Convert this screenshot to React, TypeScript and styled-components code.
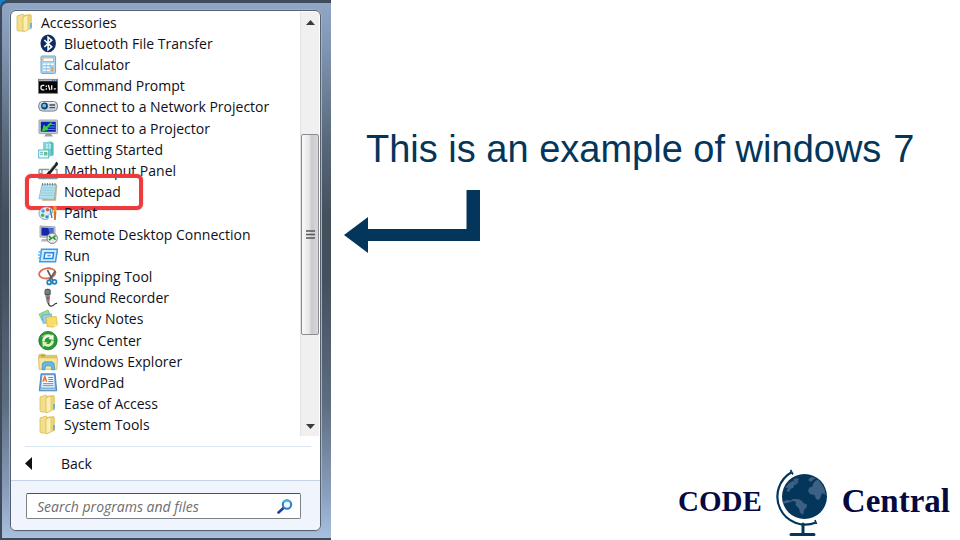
import React from 'react';
import styled, { createGlobalStyle } from 'styled-components';

const GlobalStyle = createGlobalStyle`
  *, *::before, *::after { box-sizing: border-box; }
  body {
    margin: 0;
    background: #fff;
    color: #101018;
    font-family: 'Open Sans', 'Noto Sans', sans-serif;
    font-size: 14px;
  }
  button, input { font: inherit; color: inherit; }
`;

const Page = styled.div`
  display: flex;
  min-height: 100vh;
`;

const Backdrop = styled.aside`
  display: flex;
  flex: 0 0 331px;
  background: #0b84d8;
`;

const MenuFrame = styled.nav`
  display: flex;
  flex: 1;
  padding: 7px 10px 7px 8px;
  border: solid #3f4a5a;
  border-width: 3px 0 2px 2px;
  border-top-left-radius: 8px;
  background: linear-gradient(#8fa6c5 0%, #8197b4 8%, #5a6a7c 25%, #434f5b 40%, #44505d 52%, #5d6d80 75%, #8ba0be 92%, #a8c0df 100%);
`;

const MenuPanel = styled.div`
  display: flex;
  flex: 1;
  flex-direction: column;
  border: 1px solid #56616f;
  border-radius: 6px;
  background: #fff;
  overflow: hidden;
  box-shadow: 0 0 0 1px #a3b1c4;
`;

const Programs = styled.div`
  display: flex;
  flex: 1;
  padding: 1px 1px 0 0;
`;

const ProgramList = styled.ul`
  display: grid;
  flex: 1;
  grid-auto-rows: 1fr;
  margin: 0;
  padding: 0 0 0 4px;
  list-style: none;
`;

const ProgramItem = styled.li<{ $nested?: boolean }>`
  position: relative;
  display: flex;
  padding-left: ${(p) => (p.$nested ? 23 : 0)}px;
`;

const ProgramButton = styled.button`
  display: flex;
  flex: 1;
  align-items: center;
  gap: 6px;
  padding: 0;
  border: 0;
  background: none;
  line-height: 20px;
  white-space: nowrap;
`;

const IconSvg = styled.svg`
  flex: none;
  width: 20px;
  height: 20px;
`;

const Highlight = styled.span`
  position: absolute;
  top: -8px;
  left: 10px;
  width: 118px;
  height: 36px;
  border: 4px solid #ec3a3d;
  border-radius: 6px;
  pointer-events: none;
  box-shadow: 0 0 1px #b33;
`;

const Scrollbar = styled.div`
  display: flex;
  flex: 0 0 19px;
  flex-direction: column;
  border-left: 1px solid #e2e2e2;
  background: #f0f0f0;
`;

const ScrollArrow = styled.button`
  display: flex;
  flex: 0 0 20px;
  align-items: center;
  justify-content: center;
  padding: 0;
  border: 0;
  background: none;
`;

const Track = styled.div`
  display: grid;
  flex: 1;
  grid-template-rows: 102fr 201fr 81fr;
`;

const Thumb = styled.div`
  display: flex;
  grid-row: 2;
  align-items: center;
  justify-content: center;
  border: 1px solid #8c8c90;
  border-radius: 2px;
  background: linear-gradient(90deg, #fafafa, #e6e6e8 45%, #c9c9ce 60%, #d9d9dd);
`;

const BackSection = styled.div`
  display: flex;
  flex: 0 0 34px;
  margin: 10px 9px 0 14px;
  border-top: 1px solid #d9e7f5;
`;

const BackButton = styled.button`
  display: flex;
  flex: 1;
  align-items: center;
  gap: 29px;
  padding: 0;
  border: 0;
  background: none;
`;

const SearchArea = styled.form`
  display: flex;
  padding: 12px 19px 11px 15px;
  border-top: 1px solid #c3d4ea;
  background: #f0f4fd;
`;

const SearchBox = styled.label`
  display: flex;
  flex: 1;
  align-items: center;
  height: 26px;
  padding: 0 7px 0 10px;
  border: 1px solid #7d8288;
  border-top-color: #4c4f54;
  border-radius: 2px;
  background: #fff;
`;

const SearchInput = styled.input.attrs({ type: 'text' })`
  flex: 1;
  min-width: 0;
  padding: 0;
  border: 0;
  outline: 0;
  background: none;
  font-style: italic;
  &::placeholder { color: #6d6d6d; opacity: 1; }
`;

const Content = styled.main`
  display: flex;
  flex: 1;
  flex-direction: column;
  align-items: flex-start;
  padding: 127px 10px 2px 13px;
`;

const Heading = styled.h1`
  display: flex;
  gap: 12px;
  margin: 0 0 19px 22px;
  color: #04365c;
  font: 400 38px/44px 'Liberation Sans', Arial, sans-serif;
  white-space: nowrap;
`;

const Brand = styled.footer`
  display: flex;
  align-items: center;
  align-self: flex-end;
  gap: 12px;
  margin-top: auto;
  color: #05093f;
  font-family: 'Liberation Serif', serif;
  font-weight: 700;
`;

const BrandWord = styled.span<{ $size: number }>`
  font-size: ${(p) => p.$size}px;
  line-height: 60px;
  padding-bottom: 6px;
`;

const Folder = () => (
  <>
    <path d="M2 3l6-2 1 1v16l-6 0-1-1z" fill="#f3df8a" stroke="#d3b74f" strokeWidth=".7" />
    <path d="M9 2l7-1v14l-7 4z" fill="#e4c65c" />
    <path d="M8 4l4-2 1 1v14l-5 2z" fill="#fbf0b4" stroke="#cdae45" strokeWidth=".6" />
    <path d="M13 3l4-1v14l-4 1z" fill="#e9d27a" />
    <path d="M15 10h2v4l-2 2z" fill="#67b4e4" />
  </>
);

const icons: Record<string, React.ReactNode> = {
  folder: <Folder />,
  bluetooth: (
    <>
      <ellipse cx="10.2" cy="9.4" rx="7.7" ry="8.9" fill="#0d2d60" />
      <path d="M6.3 6l7.4 6.8-3.6 3V3.2l3.6 3L6.3 13" fill="none" stroke="#fff" strokeWidth="1.6" />
    </>
  ),
  calculator: (
    <>
      <rect x="3" y="1" width="14.6" height="17.4" rx="1" fill="#acd7f2" stroke="#6ba7cf" />
      <rect x="5" y="3" width="10.6" height="3.6" fill="#fff" stroke="#efa64f" strokeWidth=".9" />
      <path d="M5.3 9.5h2.5m1.2 0h2.5m1.3 0h2.5M5.3 12.5h2.5m1.2 0h2.5M5.3 15.5h2.5m1.2 0h2.5" stroke="#fff" strokeWidth="2" />
      <path d="M5.3 10.8h10M5.3 13.8h6M5.3 16.8h6" stroke="#5f9fca" strokeWidth=".6" />
      <path d="M12.8 12h2.6v4.5h-2.6z" fill="#f1a13d" />
    </>
  ),
  prompt: (
    <>
      <rect x=".5" y="3.3" width="19.2" height="14" fill="#050505" stroke="#777" strokeWidth=".8" />
      <path d="M1 4.3h18.3" stroke="#aeb6be" strokeWidth="1.8" />
      <path d="M14 4.3h1m1 0h1m1 0h1" stroke="#3b5f8f" />
      <path d="M6.3 9.4H4.2L3 10.4v2.4l1.2 1h2.1M8.3 9.5v1.4m0 1.3v1.5M10.3 9l1.6 5M13.7 9.2v4.6M15.8 12.8h2" fill="none" stroke="#f5f5f5" strokeWidth="1.3" />
    </>
  ),
  network: (
    <>
      <rect x=".7" y="4.5" width="18.8" height="9.6" rx="4" fill="#cdd6df" stroke="#78858f" />
      <path d="M3 5.8h14" stroke="#fff" />
      <circle cx="6.5" cy="9" r="3.4" fill="#123f66" />
      <circle cx="6.2" cy="8.7" r="1.9" fill="#5fc2ee" />
      <path d="M11.5 8h5.5m-5.5 2.6h5.5" stroke="#3f5266" strokeWidth="1.3" />
    </>
  ),
  projector: (
    <>
      <rect x="1" y="1" width="18.5" height="13.6" rx=".8" fill="#c8ced3" stroke="#8b9299" strokeWidth=".8" />
      <path d="M2.8 2.7h15v10h-15z" fill="#0c22b0" />
      <path d="M10 5.5h7M10 8h7M11 10.5h6" stroke="#4a8ae8" />
      <path d="M13 3L8 7.8 5.8 5.5 3.8 12.6l7.4-1.8L9.4 9 14 4.5z" fill="#35d534" />
      <path d="M8 14.8h5l2 2.8H6z" fill="#9ba1a7" />
    </>
  ),
  started: (
    <>
      <path d="M5 2.5l8-1 2.6 1.6v12.5L5 17z" fill="#53bcc0" />
      <path d="M5 2.5l7.5-1v15L5 17z" fill="#83d5d4" />
      <path d="M8 5h2m1 0h2M8 7.5h2m1 0h2" stroke="#d5f5f2" strokeWidth="1.6" />
      <rect x=".7" y="10" width="10" height="8" fill="#eefafa" stroke="#4fb3bd" strokeWidth=".9" />
      <path d="M2 12.3h3m-3 2h3" stroke="#57b1c4" />
      <path d="M6 12h3.4v3.5H6z" fill="#67c18d" />
    </>
  ),
  math: (
    <>
      <path d="M1 8.5h10M17 8.5h2v9.2H1v-9M4 8.5v4H1" fill="none" stroke="#8c979f" strokeWidth="1.3" />
      <path d="M18.6 1.6L9.2 12.8l-2 3.2 3.4-1.8L19.6 3z" fill="#1e2226" stroke="#1e2226" strokeWidth="1.2" />
      <path d="M17 3l-6 7" stroke="#b8c4cd" strokeWidth=".8" />
    </>
  ),
  notepad: (
    <>
      <path d="M6 3h13.3L18 18.7H4z" fill="#c9b27c" />
      <path d="M4 2.4h14.3L16 17.4.9 16.8z" fill="#b4deea" stroke="#7fb0be" strokeWidth=".7" />
      <path d="M4.500 6h12M4 8.500h12M3.500 11h12M3 13.500h12" stroke="#8cc8d8" strokeWidth=".7" />
      <path d="M4.500 1v2.500M7 1v2.500M9.500 1v2.500M12 1v2.500M14.500 1v2.500M17 1v2.500" stroke="#6b7780" strokeWidth=".9" />
    </>
  ),
  paint: (
    <>
      <path d="M1 10C1 6 5.5 3.5 9.500 4s5.500 2.500 5 5-3.500 1.500-4 3.500 1 4-3 4S1 14 1 10z" fill="#d9edf7" stroke="#6fa9cc" />
      <circle cx="5" cy="8" r="1.8" fill="#4c9bdb" />
      <circle cx="9.5" cy="6.8" r="1.7" fill="#e95b2c" />
      <circle cx="4.6" cy="12.3" r="1.7" fill="#59ad47" />
      <circle cx="8.8" cy="13.8" r="1.5" fill="#3989c7" />
      <path d="M15.200 3.500l2-.8 1.800 2-1 4h-2z" fill="#ef9a2e" />
      <path d="M15.600 8.500h2.800l-.6 8.500h-1.600z" fill="#df6e1d" />
      <path d="M12 6l2 9" stroke="#3f85b3" strokeWidth="1.4" />
    </>
  ),
  remote: (
    <>
      <path d="M2 1l15 .8v11L2 12z" fill="#cfd3d8" stroke="#8f969e" strokeWidth=".8" />
      <path d="M3.4 2.5l12 .6v8l-12-.6z" fill="#1528a5" />
      <path d="M10 3l5.4.2v7.8l-3-.1z" fill="#486cda" />
      <path d="M4 14h8l1 2.500H3z" fill="#afb5bb" />
      <circle cx="14.2" cy="13.3" r="5.2" fill="#e6e9e7" stroke="#7b8280" />
      <path d="M11 11.200l2.400 2-2.400 2M17.600 10.600l-2.400 2 2.400 2" fill="none" stroke="#269231" strokeWidth="1.6" />
    </>
  ),
  run: (
    <>
      <path d="M3.5 3.3h16l-2 12.500H1.8z" fill="#cfeafb" stroke="#3a9be6" strokeWidth="1.5" />
      <path d="M7 6.8h8.600l-.8 5.600H6z" fill="#fff" stroke="#2b86d8" strokeWidth="1.5" />
      <path d="M9.4 8.700h3.500l-.3 1.900H9.200z" fill="#4fa8ec" />
      <path d="M.5 6h3M0 9h3M.3 12h2.500" stroke="#5db3f0" strokeWidth="1.3" />
    </>
  ),
  snip: (
    <>
      <ellipse cx="9.2" cy="6.4" rx="8.2" ry="5" fill="none" stroke="#de6b50" strokeWidth="1.8" transform="rotate(-9 9 6)" />
      <path d="M9.4 3l5.400 10.500M17.200 4l-6 9.500" stroke="#59626a" strokeWidth="1.7" />
      <circle cx="11.2" cy="15.4" r="2" fill="none" stroke="#1e83bd" strokeWidth="1.7" />
      <circle cx="16.5" cy="14.8" r="2" fill="none" stroke="#1e83bd" strokeWidth="1.7" />
    </>
  ),
  sound: (
    <>
      <rect x="6.5" y=".8" width="6.2" height="7" rx="2.5" fill="#4c4f53" />
      <path d="M7.500 3h4M7.500 5h4" stroke="#a9adb1" />
      <path d="M7.200 7.500h5l-.8 8H9z" fill="#85898e" />
      <path d="M10 9v2.500" stroke="#df3024" strokeWidth="1.5" />
      <path d="M10.400 15c.4 4 4 3.500 5.500 1.800s2-1.400 3.200-1.300" fill="none" stroke="#33363a" strokeWidth="1.2" />
    </>
  ),
  sticky: (
    <>
      <path d="M1 5l9-4 3.200 7-9 4z" fill="#9bdc8e" stroke="#6fbd68" strokeWidth=".7" />
      <path d="M4 6l9.500-1 .8 8.600-9.300.8z" fill="#94cdf2" stroke="#5fa5d5" strokeWidth=".7" />
      <path d="M8.200 8.200l10-.7 1.200 8.300-4 2.400-6.300-.6z" fill="#f9dc68" stroke="#dbb53b" strokeWidth=".7" />
      <path d="M15.400 18l.4-2.600 3.400.2z" fill="#fff0a6" />
    </>
  ),
  sync: (
    <>
      <circle cx="10" cy="9.6" r="9.2" fill="#279832" stroke="#19702a" strokeWidth=".8" />
      <path d="M3 6.5a8 7 0 0114 0 12 8 0 00-14 0z" fill="#91d486" />
      <path d="M4.3 10.5a6 6 0 019.2-5.7l1.7-1.5.6 5.7-5.4-.9 1.6-1.5a4 4 0 00-5.4 3.9z" fill="#f5fbe9" />
      <path d="M15.8 9.4a6 6 0 01-9.4 5.3l-1.6 1.5-.5-5.7 5.400 1-1.600 1.400a4 4 0 005.200-3.500z" fill="#d7f0bd" />
    </>
  ),
  explorer: (
    <>
      <path d="M.8 3.500l1-1.300h5l1 1.200h11v3H.8z" fill="#e4c763" stroke="#c7a541" strokeWidth=".6" />
      <path d="M3 3.800h4" stroke="#59b14e" strokeWidth="1.2" />
      <path d="M.6 5.800h18.900l-.6 11.500H1.200z" fill="#f7e69c" stroke="#d2b553" strokeWidth=".8" />
      <path d="M4 17.800l.5-6.500 2-1.500h7.500l2 1.500.8 6.500h-3l-.7-4H7.600l-.8 4z" fill="#62b9ea" stroke="#358fc9" strokeWidth=".7" />
    </>
  ),
  wordpad: (
    <>
      <path d="M3 .8h14.200l1.500 17H1.300z" fill="#6ea6d9" stroke="#3c76b0" strokeWidth=".8" />
      <path d="M4.400 2.200h11.400l1 12.300H3.300z" fill="#f4f9fd" />
      <path d="M4.800 8.800l2-5.300 2 5.300M5.500 7h2.700" fill="none" stroke="#e66a28" strokeWidth="1.2" />
      <path d="M10.300 4.500h4.600M10.300 6.500h4.800M10.300 8.500h5M5 10.700h10.400M4.800 12.700h10.800" stroke="#547fae" strokeWidth=".9" />
      <path d="M2.500 16.300h15" stroke="#bddcf3" />
    </>
  ),
};

type Program = { name: string; icon: string; marked?: boolean };

const programs: Program[] = [
  { name: 'Bluetooth File Transfer', icon: 'bluetooth' },
  { name: 'Calculator', icon: 'calculator' },
  { name: 'Command Prompt', icon: 'prompt' },
  { name: 'Connect to a Network Projector', icon: 'network' },
  { name: 'Connect to a Projector', icon: 'projector' },
  { name: 'Getting Started', icon: 'started' },
  { name: 'Math Input Panel', icon: 'math' },
  { name: 'Notepad', icon: 'notepad', marked: true },
  { name: 'Paint', icon: 'paint' },
  { name: 'Remote Desktop Connection', icon: 'remote' },
  { name: 'Run', icon: 'run' },
  { name: 'Snipping Tool', icon: 'snip' },
  { name: 'Sound Recorder', icon: 'sound' },
  { name: 'Sticky Notes', icon: 'sticky' },
  { name: 'Sync Center', icon: 'sync' },
  { name: 'Windows Explorer', icon: 'explorer' },
  { name: 'WordPad', icon: 'wordpad' },
  { name: 'Ease of Access', icon: 'folder' },
  { name: 'System Tools', icon: 'folder' },
];

const Icon = ({ name }: { name: string }) => (
  <IconSvg viewBox="0 0 20 20" aria-hidden="true">{icons[name]}</IconSvg>
);

const StartMenu = () => (
  <Backdrop>
    <MenuFrame aria-label="Start menu">
      <MenuPanel>
        <Programs>
          <ProgramList>
            <ProgramItem>
              <ProgramButton type="button"><Icon name="folder" />Accessories</ProgramButton>
            </ProgramItem>
            {programs.map((p) => (
              <ProgramItem key={p.name} $nested>
                <ProgramButton type="button"><Icon name={p.icon} />{p.name}</ProgramButton>
                {p.marked && <Highlight />}
              </ProgramItem>
            ))}
          </ProgramList>
          <Scrollbar>
            <ScrollArrow type="button" aria-label="Scroll up">
              <svg width="9" height="5" viewBox="0 0 9 5"><path d="M4.5 0L9 5H0z" fill="#3a3a3a" /></svg>
            </ScrollArrow>
            <Track>
              <Thumb>
                <svg width="9" height="9" viewBox="0 0 9 9">
                  <path d="M0 1h9M0 4.500h9M0 8h9" stroke="#55555a" strokeWidth="1.500" />
                </svg>
              </Thumb>
            </Track>
            <ScrollArrow type="button" aria-label="Scroll down">
              <svg width="9" height="5" viewBox="0 0 9 5"><path d="M0 0h9L4.500 5z" fill="#3a3a3a" /></svg>
            </ScrollArrow>
          </Scrollbar>
        </Programs>
        <BackSection>
          <BackButton type="button">
            <svg width="7" height="13" viewBox="0 0 7 13"><path d="M7 0v13L0 6.500z" fill="#111" /></svg>
            Back
          </BackButton>
        </BackSection>
        <SearchArea>
          <SearchBox>
            <SearchInput aria-label="Search programs and files" placeholder="Search programs and files" />
            <svg width="16" height="15" viewBox="0 0 16 15" aria-hidden="true">
              <path d="M7 8.500L1.500 13.500" stroke="#233f92" strokeWidth="2.600" strokeLinecap="round" />
              <circle cx="10" cy="5.500" r="4.200" fill="#eef8ff" stroke="#2a7cc4" strokeWidth="2" />
              <path d="M6.500 3.500a4.200 4.200 0 017 0" fill="none" stroke="#43b0df" strokeWidth="2" />
            </svg>
          </SearchBox>
        </SearchArea>
      </MenuPanel>
    </MenuFrame>
  </Backdrop>
);

const Arrow = () => (
  <svg width="136" height="63" viewBox="0 0 136 63" aria-hidden="true">
    <path d="M122.500 0H136v51H24v12L0 45l24-18v12h98.500z" fill="#04365c" />
  </svg>
);

const Globe = () => (
  <svg width="56" height="69" viewBox="0 0 56 69" aria-hidden="true">
    <circle cx="30.500" cy="27.500" r="22.500" fill="#04365c" />
    <g fill="#3c6184">
      <path d="M10.500 19.500l4-5 4-2.500 3 1 1.500 2.500-3 .5-.5 2.500-3 1.500-1.500 3-2.500-1 1.500-3-2.500-.5z" />
      <path d="M19 11l3-2 3 1-1.500 2.500 1.500 2-2.500-.5-1.500-1.500z" />
      <path d="M8.500 33l4-2 4 .5 2.500-1.500 5 0 3.500 1.500 2 2.500 3.500 1.500-.5 3-2.500 2.500-1 5-3-2.500-1-4-3.500-3.500.5-3-3-1-4 1.500-5 1z" />
      <path d="M39 15l2-3 3-1.500 3.500 4.500 3 5 1 6-3.500-2-1 3-2 4-3-1-1.500-4-4.500-1-2-3 1.500-3.500 3-1z" />
      <path d="M34 11l3-3 5 1-3 2-2 2z" />
    </g>
    <path d="M18 3A28 28 0 0042 53.500" fill="none" stroke="#04365c" strokeWidth="2.200" />
    <path d="M16.500 1l2.500 4.500M41 51l1.500 4" fill="none" stroke="#04365c" strokeWidth="1.600" />
    <path d="M29 55v9M17 65.500h23" fill="none" stroke="#04365c" strokeWidth="3" strokeLinecap="round" />
  </svg>
);

export default function App() {
  return (
    <>
      <GlobalStyle />
      <Page>
        <StartMenu />
        <Content>
          <Heading><span>This is an example of windows</span><span>7</span></Heading>
          <Arrow />
          <Brand>
            <BrandWord $size={29}>CODE</BrandWord>
            <Globe />
            <BrandWord $size={33}>Central</BrandWord>
          </Brand>
        </Content>
      </Page>
    </>
  );
}
